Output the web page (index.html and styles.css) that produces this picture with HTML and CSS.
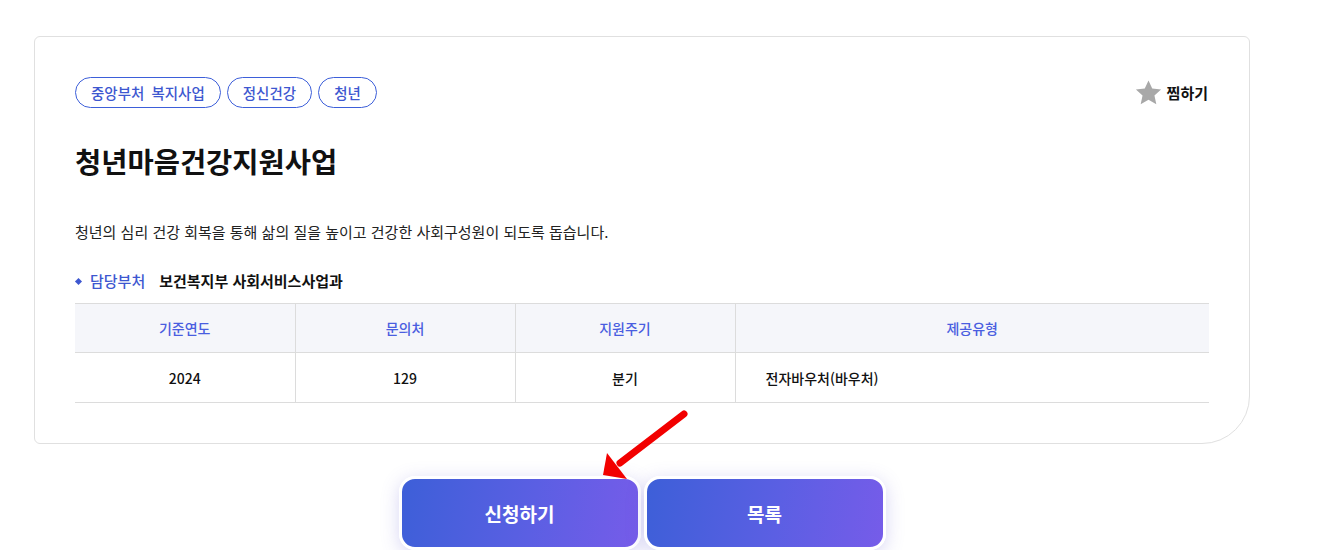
FILE: index.html
```html
<!DOCTYPE html>
<html lang="ko">
<head>
<meta charset="utf-8">
<link rel="stylesheet" href="styles.css">
</head>
<body>
<div class="page">
  <section class="card">
    <div class="top-row">
      <ul class="tags">
        <li class="tag">중앙부처 복지사업</li>
        <li class="tag">정신건강</li>
        <li class="tag">청년</li>
      </ul>
      <button class="fav">
        <svg width="29" height="28" viewBox="0 0 24 24"><path d="M12 1.2l3.2 7 7.6.8-5.7 5.1 1.6 7.5L12 17.8l-6.7 3.8 1.6-7.5L1.2 9l7.6-.8z" fill="#a8a8a8"/></svg>
        <span>찜하기</span>
      </button>
    </div>
    <h1 class="title">청년마음건강지원사업</h1>
    <p class="desc">청년의 심리 건강 회복을 통해 삶의 질을 높이고 건강한 사회구성원이 되도록 돕습니다.</p>
    <div class="dept">
      <span class="dept-label">담당부처</span>
      <span class="dept-value">보건복지부 사회서비스사업과</span>
    </div>
    <table class="info">
      <thead>
        <tr><th>기준연도</th><th>문의처</th><th>지원주기</th><th>제공유형</th></tr>
      </thead>
      <tbody>
        <tr><td>2024</td><td>129</td><td>분기</td><td class="left">전자바우처(바우처)</td></tr>
      </tbody>
    </table>
  </section>
  <div class="actions">
    <button class="btn">신청하기</button>
    <button class="btn">목록</button>
    <svg class="arrow" width="100" height="80" viewBox="0 0 100 80">
      <line x1="84" y1="9" x2="20" y2="58" stroke="#f20000" stroke-width="7" stroke-linecap="round"/>
      <polygon points="3,70 7,48 27,74" fill="#f20000"/>
    </svg>
  </div>
</div>
</body>
</html>
```

FILE: styles.css
```css
* { box-sizing: border-box; }
html, body { margin: 0; padding: 0; background: #fff; }
body {
  font-family: "Noto Sans CJK KR", "Noto Sans", sans-serif;
  color: #111;
}
.page {
  width: 1216px;
  margin-left: 34px;
  padding-top: 36px;
}
.card {
  border: 1px solid #e0e0e0;
  border-radius: 6px 6px 48px 6px;
  padding: 40px 40px 40px 40px;
  background: #fff;
}
.top-row {
  display: flex;
  justify-content: space-between;
  align-items: center;
}
.tags {
  display: flex;
  gap: 6px;
  list-style: none;
  margin: 0;
  padding: 0;
}
.tag {
  height: 31px;
  padding: 0 15px;
  border: 1px solid #3d5fd9;
  border-radius: 16px;
  color: #3d57d0;
  font-size: 14.5px;
  line-height: 29px;
  font-weight: 500;
  word-spacing: 3px;
}
.fav {
  display: flex;
  align-items: center;
  gap: 4px;
  border: 0;
  background: none;
  padding: 0;
  margin-right: 1px;
  font-family: inherit;
  font-size: 15px;
  font-weight: 700;
  color: #111;
}
.title {
  margin: 33px 0 0;
  font-size: 28.5px;
  line-height: 40px;
  font-weight: 700;
  color: #111;
}
.desc {
  margin: 40px 0 0;
  font-size: 15px;
  line-height: 22px;
  color: #222;
}
.dept {
  margin-top: 27px;
  display: flex;
  align-items: center;
  font-size: 15px;
  line-height: 22px;
}
.dept-label {
  position: relative;
  padding-left: 15px;
  color: #3d57d0;
  font-weight: 500;
  margin-right: 14px;
}
.dept-label::before {
  content: "";
  position: absolute;
  left: 1px;
  top: 9px;
  width: 5px;
  height: 5px;
  background: #3d57d0;
  transform: rotate(45deg);
}
.dept-value {
  font-weight: 700;
  color: #111;
}
.info {
  width: 100%;
  margin-top: 11px;
  border-collapse: collapse;
  table-layout: fixed;
  font-size: 14px;
}
.info th, .info td {
  border-top: 1px solid #dcdcdc;
  border-bottom: 1px solid #dcdcdc;
  border-left: 1px solid #dcdcdc;
  text-align: center;
}
.info th:first-child, .info td:first-child { border-left: 0; }
.info th:nth-child(-n+3), .info td:nth-child(-n+3) { width: 220px; }
.info th {
  height: 49px;
  background: #f5f6fa;
  color: #4a5ee0;
  font-weight: 500;
}
.info td {
  height: 50px;
  color: #111;
  font-weight: 500;
}
.info td.left {
  text-align: left;
  padding-left: 30px;
}
.actions {
  position: relative;
  display: flex;
  justify-content: center;
  gap: 3px;
  margin-top: 32px;
}
.btn {
  width: 242px;
  height: 74px;
  border: 3px solid #fff;
  border-radius: 16px;
  background: linear-gradient(100deg, #3d5fd8 0%, #5b5fe3 55%, #765ce9 100%);
  color: #fff;
  font-family: inherit;
  font-size: 19px;
  font-weight: 700;
  box-shadow: 0 4px 18px rgba(100, 90, 210, 0.25);
}
.arrow {
  position: absolute;
  left: 566px;
  top: -71px;
}
```
